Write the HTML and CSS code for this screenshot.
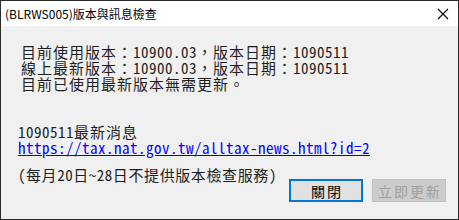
FILE: index.html
```html
<!DOCTYPE html>
<html lang="zh-Hant">
<head>
  <meta charset="UTF-8">
  <title>(BLRWS005)版本與訊息檢查</title>
  <link rel="stylesheet" href="styles.css">
</head>
<body>
  <div class="window">
    <div class="titlebar">
      <span class="title">(BLRWS005)版本與訊息檢查</span>
      <svg class="close" width="12" height="12" viewBox="0 0 12 12">
        <path d="M1 1 L11 11 M11 1 L1 11" stroke="#000" stroke-width="1.1" fill="none"/>
      </svg>
    </div>
    <div class="content">
      <div class="info">
        <div>目前使用版本：<span class="en">10900.03</span>，版本日期：<span class="en">1090511</span></div>
        <div>線上最新版本：<span class="en">10900.03</span>，版本日期：<span class="en">1090511</span></div>
        <div>目前已使用最新版本無需更新。</div>
      </div>
      <div class="news">
        <div><span class="en">1090511</span>最新消息</div>
        <div><a class="en" href="#">https://tax.nat.gov.tw/alltax-news.html?id=2</a></div>
      </div>
      <div class="footer">
        <span class="note"><span class="en">(</span>每月<span class="en">20</span>日<span class="en">~28</span>日不提供版本檢查服務<span class="en">)</span></span>
        <div class="buttons">
          <button class="btn default">關閉</button>
          <button class="btn" disabled>立即更新</button>
        </div>
      </div>
    </div>
  </div>
</body>
</html>
```
FILE: styles.css
```css
html, body { margin: 0; padding: 0; }
body { background: #f0f0f0; }
.window { width: 459px; height: 220px; box-sizing: border-box; border: 1px solid #2b2b2b; background: #f0f0f0; display: flex; flex-direction: column; }
.titlebar { height: 25px; background: #fff; display: flex; align-items: center; justify-content: space-between; padding: 0 9px 0 4px; }
.title { font-family: "Noto Sans CJK TC", "Noto Sans", sans-serif; font-size: 12px; color: #000; }
.close { display: block; margin-top: 1px; }
.content { flex: 1; font-family: "Noto Sans CJK TC", sans-serif; font-size: 15px; line-height: 16px; letter-spacing: 1px; color: #1e1e1e; }
.en { font-feature-settings: "hwid"; letter-spacing: 0.5px; }
.info { padding: 18px 0 0 20px; }
.news { margin-top: 32px; padding-left: 17px; }
.news a { color: #0000ff; text-decoration: underline; }
.footer { margin-top: 11px; display: flex; align-items: flex-start; padding: 0 12px 0 17px; }
.note { flex: 1; white-space: nowrap; letter-spacing: 0.6px; }
.buttons { display: flex; gap: 9px; margin-top: 12px; }
.btn { width: 74px; height: 23px; box-sizing: border-box; background: #e1e1e1; border: 1px solid #adadad; font-family: "Noto Sans CJK TC", sans-serif; font-size: 14px; line-height: 14px; letter-spacing: 2px; padding: 0 0 0 2px; color: #000; }
.btn.default { border: 2px solid #0078d7; }
.btn:disabled { background: #cccccc; border-color: #bfbfbf; color: #a0a0a0; }
```
